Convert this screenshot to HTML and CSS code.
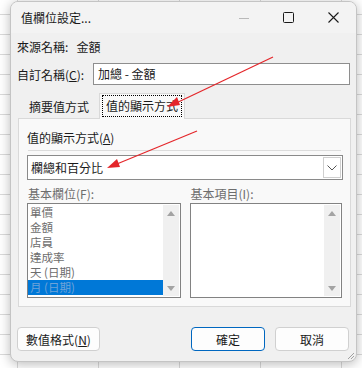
FILE: index.html
```html
<!DOCTYPE html>
<html lang="zh-Hant">
<head>
<meta charset="UTF-8">
<meta name="viewport" content="width=device-width, initial-scale=1.0">
<link rel="stylesheet" href="styles.css">
<title>值欄位設定</title>
</head>
<body>
<div class="dialog">
  <div class="titlebar">
    <span class="title">值欄位設定...</span>
    <div class="caption">
      <span class="cap cap-min"><svg width="10" height="10" viewBox="0 0 10 10"><path d="M0 5.5h10" stroke="#b9b9b9" stroke-width="1"/></svg></span>
      <span class="cap"><svg width="11" height="11" viewBox="0 0 11 11"><rect x="0.5" y="0.5" width="10" height="10" rx="1" fill="none" stroke="#1a1a1a"/></svg></span>
      <span class="cap"><svg width="11" height="11" viewBox="0 0 11 11"><path d="M0.5 0.5L10.5 10.5M10.5 0.5L0.5 10.5" stroke="#1a1a1a" stroke-width="1.1"/></svg></span>
    </div>
  </div>

  <div class="content">
    <div class="row source">來源名稱:&nbsp;&nbsp;&nbsp;金額</div>
    <div class="row custom">
      <label>自訂名稱(<u>C</u>):</label>
      <div class="textbox">加總 - 金額</div>
    </div>

    <div class="tabs">
      <div class="tab">摘要值方式</div>
      <div class="tab active"><span class="focus">值的顯示方式</span></div>
    </div>
    <div class="panel">
      <div class="group-label">值的顯示方式(<u>A</u>)</div>
      <div class="sep"></div>
      <div class="combo">
        <span class="combo-text">欄總和百分比</span>
        <span class="combo-btn"><svg width="10" height="6" viewBox="0 0 10 6"><path d="M0.5 0.5L5 5L9.5 0.5" fill="none" stroke="#555" stroke-width="1"/></svg></span>
      </div>
      <div class="lists">
        <div class="list-col">
          <div class="list-label">基本欄位(F):</div>
          <div class="listbox">
            <ul class="items">
              <li>單價</li>
              <li>金額</li>
              <li>店員</li>
              <li>達成率</li>
              <li>天 (日期)</li>
              <li class="selected">月 (日期)</li>
            </ul>
            <div class="scroll"><span class="arrow-up"></span><span class="arrow-down"></span></div>
          </div>
        </div>
        <div class="list-col">
          <div class="list-label">基本項目(I):</div>
          <div class="listbox">
            <ul class="items"></ul>
            <div class="scroll"><span class="arrow-up"></span><span class="arrow-down"></span></div>
          </div>
        </div>
      </div>
    </div>

    <div class="footer">
      <button class="btn btn-format">數值格式(<u>N</u>)</button>
      <div class="footer-right">
        <button class="btn btn-ok">確定</button>
        <button class="btn">取消</button>
      </div>
    </div>
  </div>
  <svg class="grip" width="8" height="8" viewBox="0 0 8 8"><path d="M7 1L1 7M7 4L4 7" stroke="#a0a0a0" stroke-width="1"/></svg>
</div>

<svg class="arrows" width="362" height="368" viewBox="0 0 362 368">
  <path d="M273 57L172 105" stroke="#e4262a" stroke-width="1.2"/>
  <path d="M167 107L177 97L180 105Z" fill="#e4262a"/>
  <path d="M197 131L112 166" stroke="#e4262a" stroke-width="1.2"/>
  <path d="M107 168L117 159L120 167Z" fill="#e4262a"/>
</svg>
</body>
</html>
```

FILE: styles.css
```css
body {
  margin: 0;
  width: 362px;
  height: 368px;
  overflow: hidden;
  position: relative;
  font-family: "Noto Sans CJK TC", "Microsoft JhengHei", sans-serif;
  font-size: 12px;
  color: #1a1a1a;
  background-color: #ffffff;
  background-image:
    linear-gradient(to right, #dadada 1px, transparent 1px),
    linear-gradient(to bottom, #dadada 1px, transparent 1px);
  background-size: 81px 20px;
  background-position: 17px 14px;
}
.dialog {
  position: relative;
  margin: 1px 0 0 10px;
  width: 347px;
  height: 361px;
  box-sizing: border-box;
  background: #f0f0f0;
  border: 1px solid #c4c4c4;
  border-radius: 8px;
  box-shadow: 0 2px 12px rgba(0, 0, 0, 0.28);
  overflow: hidden;
}
.titlebar {
  height: 31px;
  display: flex;
  align-items: center;
  justify-content: space-between;
  background: #f3f3f3;
  padding-left: 10px;
}
.caption {
  display: flex;
  height: 100%;
}
.cap {
  width: 45px;
  display: flex;
  align-items: center;
  justify-content: center;
}
.content {
  padding: 3px 6px 0 6px;
}
.row {
  display: flex;
  align-items: center;
}
.source {
  height: 20px;
}
.custom {
  margin-top: 7px;
  height: 22px;
}
.custom label {
  width: 76px;
}
.textbox {
  flex: 1;
  height: 22px;
  box-sizing: border-box;
  border: 1px solid #8e8e8e;
  background: #ffffff;
  padding: 0 4px;
  line-height: 20px;
}
.tabs {
  display: flex;
  align-items: flex-end;
  margin-top: 7px;
  height: 26px;
  padding-left: 1px;
}
.tab {
  height: 23px;
  line-height: 23px;
  padding: 0 10px 0 11px;
}
.tab.active {
  height: 26px;
  line-height: 24px;
  padding: 0 3px;
  background: #f9f9f9;
  border: 1px solid #d9d9d9;
  border-bottom: none;
  position: relative;
  top: 1px;
  box-sizing: border-box;
}
.focus {
  display: inline-block;
  outline: 1px dotted #000;
  padding: 0 3px;
  line-height: 20px;
  margin-top: 2px;
}
.panel {
  margin-left: 1px;
  width: 333px;
  height: 189px;
  box-sizing: border-box;
  background: #f9f9f9;
  border: 1px solid #d9d9d9;
  padding: 9px 8px 0 8px;
}
.group-label {
  height: 20px;
  line-height: 20px;
}
.sep {
  height: 1px;
  background: #dcdcdc;
  margin: 2px 0 4px 1px;
  width: 313px;
}
.combo {
  display: flex;
  align-items: stretch;
  height: 25px;
  width: 316px;
  box-sizing: border-box;
  border: 1px solid #8a8a8a;
  background: #ffffff;
}
.combo-text {
  flex: 1;
  line-height: 23px;
  padding-left: 3px;
}
.combo-btn {
  width: 16px;
  margin: 1px;
  border: 1px solid #cfcfcf;
  display: flex;
  align-items: center;
  justify-content: center;
}
.lists {
  display: flex;
  gap: 9px;
  margin-top: 4px;
}
.list-col {
  width: 154px;
}
.list-col:first-child {
  width: 155px;
}
.list-label {
  height: 19px;
  line-height: 19px;
  color: #6d6d6d;
  padding-left: 1px;
}
.listbox {
  display: flex;
  height: 95px;
  box-sizing: border-box;
  border: 1px solid #828282;
  background: #ffffff;
}
.items {
  flex: 1;
  list-style: none;
  margin: 0;
  padding: 1px 0 0 0;
  color: #6d6d6d;
  font-size: 11.5px;
}
.items li {
  height: 15px;
  line-height: 15px;
  padding-left: 2px;
}
.items li.selected {
  background: #0078d7;
  color: #6fa3d8;
}
.scroll {
  width: 16px;
  margin: 1px 1px 1px 0;
  background: #f0f0f0;
  display: flex;
  flex-direction: column;
  justify-content: space-between;
  align-items: center;
  padding: 6px 0 5px;
  box-sizing: border-box;
}
.arrow-up {
  border-left: 4px solid transparent;
  border-right: 4px solid transparent;
  border-bottom: 5px solid #a3a3a3;
}
.arrow-down {
  border-left: 4px solid transparent;
  border-right: 4px solid transparent;
  border-top: 5px solid #a3a3a3;
}
.footer {
  display: flex;
  justify-content: space-between;
  margin-top: 20px;
}
.footer-right {
  display: flex;
  gap: 10px;
  margin-right: 1px;
}
.btn {
  height: 24px;
  width: 74px;
  font-family: inherit;
  font-size: 12px;
  color: #1a1a1a;
  background: #fdfdfd;
  border: 1px solid #d0d0d0;
  border-radius: 4px;
  padding: 0;
}
.btn-format {
  width: 83px;
}
.btn-ok {
  border-color: #0067c0;
}
.grip {
  position: absolute;
  right: 1px;
  bottom: 1px;
}
.arrows {
  position: absolute;
  left: 0;
  top: 0;
  pointer-events: none;
}
```
